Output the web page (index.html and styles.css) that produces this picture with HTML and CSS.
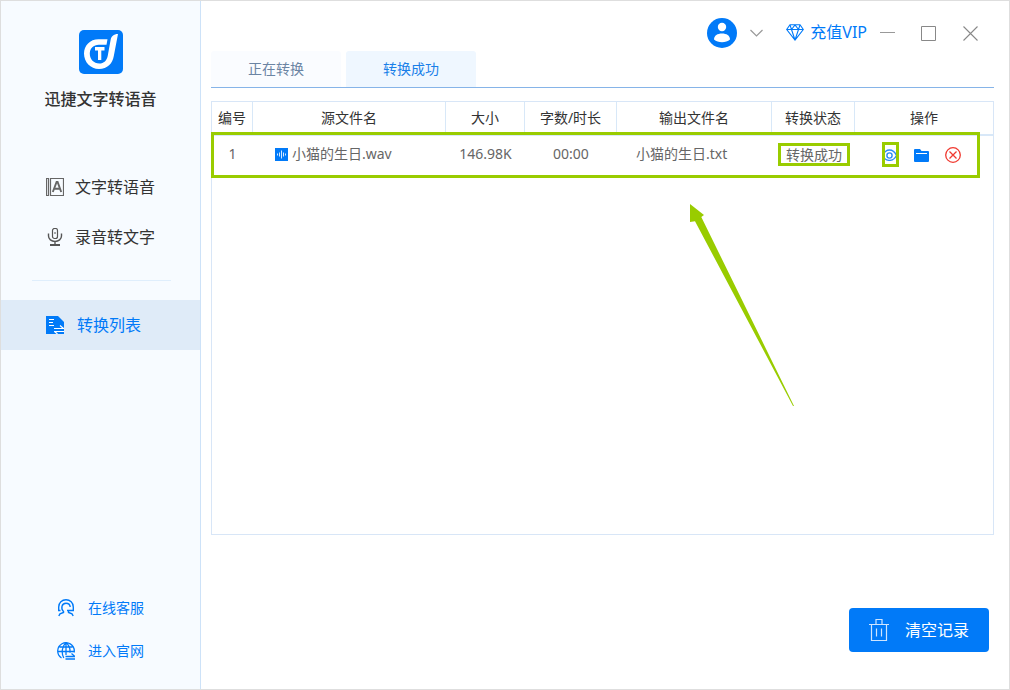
FILE: index.html
```html
<!DOCTYPE html>
<html lang="zh-CN">
<head>
<meta charset="utf-8">
<title>迅捷文字转语音</title>
<link rel="stylesheet" href="styles.css">
</head>
<body>
<div class="app">
  <aside class="sidebar">
    <div class="brand">
      <svg class="logo" width="44" height="44" viewBox="0 0 44 44" aria-hidden="true">
        <rect width="44" height="44" rx="5" fill="#017af8"/>
        <path d="M28.500 9.200H19.500C11 9.200 5 15.500 5 23.500C5 32 11.500 39 20 39C28.500 39 33.500 33.500 34.800 26L39 4C34.500 4 32.300 6.500 31.600 10L28.800 25.500C28 30.500 24.800 33.600 20.300 33.600C14.800 33.600 10.800 29.200 10.800 23.800C10.800 18.500 14.500 14.800 19.800 14.800H27.500Z" fill="#fff"/>
        <path d="M16 17h9.500v3.500H22.300V30H19V20.500H16z" fill="#fff"/>
      </svg>
      <h1 class="brand-name">迅捷文字转语音</h1>
    </div>
    <nav class="nav">
      <a class="nav-item" href="#tts">
        <svg width="18" height="18" viewBox="0 0 18 18" fill="none" stroke="#666" aria-hidden="true">
          <path d="M.5.5h2v17h-2zM4.500.5h13v17h-13z" stroke-width="1.200"/><path d="M6.800 14L10.600 4h1L15.200 14M8.200 10.800h5.600" stroke-width="1.900"/>
        </svg>
        <span>文字转语音</span>
      </a>
      <a class="nav-item" href="#stt">
        <svg width="18" height="18" viewBox="0 0 18 18" fill="none" stroke="#555" aria-hidden="true">
          <rect x="6.500" y=".5" width="5" height="10" rx="2" stroke-width="1.200"/><path d="M2.500 5.500v2.500a6.500 5.500 0 0 0 13 0V5.500M9 13.500v3" stroke-width="1.400"/><path d="M4 17h10" stroke-width="2"/><path d="M8 5h2"/>
        </svg>
        <span>录音转文字</span>
      </a>
      <hr class="nav-rule">
      <a class="nav-item active" href="#list" aria-current="page">
        <svg width="18" height="18" viewBox="0 0 18 18" aria-hidden="true">
          <path d="M0 0h12l6 6v12H0z" fill="#017af8"/>
          <path d="M3 3.500h5M3 6.500h4M3 9.500h5" stroke="#fff"/>
          <path d="M8 12.500h10M8 15.500h10M14 9.500l3.500 3M8.500 15.500l3 2.500" stroke="#fff" stroke-width="1.200" fill="none"/>
        </svg>
        <span>转换列表</span>
      </a>
    </nav>
    <div class="links">
      <a class="link" href="#service">
        <svg width="18" height="18" viewBox="0 0 18 18" fill="none" stroke="#017af8" stroke-width="1.400" aria-hidden="true">
          <path d="M3.500 11.500H1.700V8C1.700 3.500 5 .8 9 .8s7.300 2.700 7.300 7.200v3.500H10"/><path d="M6.500 12.500C3.800 10 4.300 4.300 9 4.300c2.800 0 4 1.700 4.200 3.700M6.500 12v1.500L3 14.800 1.800 17M11.500 12v1.500l3.500 1.300 1.200 2.200"/>
        </svg>
        <span>在线客服</span>
      </a>
      <a class="link" href="#site">
        <svg width="18" height="18" viewBox="0 0 18 18" fill="none" stroke="#017af8" stroke-width="1.300" aria-hidden="true">
          <path d="M4.500 16A8.300 8.300 0 1 1 17.300 9v1.500M6.800 16C4 11 5 4 9 .8c3 2.200 4.300 6 4 10M9 .8V13M1 9.500h16M2.500 5h13M8.500 17h9.500M8.500 14.500H18l-3.500-3"/>
        </svg>
        <span>进入官网</span>
      </a>
    </div>
  </aside>

  <main class="main">
    <header class="titlebar">
      <button class="icon-button avatar" type="button" aria-label="账户">
        <svg width="30" height="30" viewBox="0 0 30 30" aria-hidden="true"><circle cx="15" cy="15" r="15" fill="#017af8"/><circle cx="15" cy="9" r="4.200" fill="#fff"/><path d="M7 21.500c0-4 3.500-6 8-6s8 2 8 6c-2 2-5 2.700-8 2.700s-6-.7-8-2.700z" fill="#fff"/></svg>
      </button>
      <button class="icon-button chevron" type="button" aria-label="展开">
        <svg width="13" height="8" viewBox="0 0 13 8" fill="none" stroke="#999" stroke-width="1.200" aria-hidden="true"><path d="M.5 1l6 6 6-6"/></svg>
      </button>
      <button class="icon-button vip" type="button">
        <svg width="18" height="17" viewBox="0 0 18 17" fill="none" stroke="#017af8" stroke-width="1.100" aria-hidden="true"><path d="M4 .8h10l3.300 4.700L9 16 .7 5.500zM.7 5.500h16.600M4 .8l1.500 4.700L9 16l3.500-10.500L14 .8M5.500 5.500L9 1l3.500 4.500"/></svg>
        <span>充值VIP</span>
      </button>
      <button class="icon-button minimize" type="button" aria-label="最小化">
        <svg width="15" height="15" viewBox="0 0 15 15" stroke="#999" aria-hidden="true"><path d="M0 6.500h15"/></svg>
      </button>
      <button class="icon-button maximize" type="button" aria-label="最大化">
        <svg width="15" height="15" viewBox="0 0 15 15" fill="none" stroke="#888" aria-hidden="true"><path d="M.5.5h14v14H.5z"/></svg>
      </button>
      <button class="icon-button close" type="button" aria-label="关闭">
        <svg width="15" height="15" viewBox="0 0 15 15" stroke="#888" stroke-width="1.100" aria-hidden="true"><path d="M.5.5l14 14M14.500.5l-14 14"/></svg>
      </button>
    </header>

    <div class="tabs" role="tablist">
      <button class="tab" type="button" role="tab" aria-selected="false">正在转换</button>
      <button class="tab selected" type="button" role="tab" aria-selected="true">转换成功</button>
    </div>

    <section class="frame">
      <table class="files">
        <colgroup>
          <col class="col-no"><col><col class="col-size"><col class="col-time"><col class="col-output"><col class="col-status"><col class="col-actions">
        </colgroup>
        <thead>
          <tr><th>编号</th><th>源文件名</th><th>大小</th><th>字数/时长</th><th>输出文件名</th><th>转换状态</th><th>操作</th></tr>
        </thead>
        <tbody>
          <tr>
            <td>1</td>
            <td class="source">
              <span class="file">
                <svg width="13" height="13" viewBox="0 0 13 13" aria-hidden="true"><rect width="13" height="13" fill="#017af8"/><path d="M2.500 5.500v2M4.500 4.500v4M6.500 2.500v8M8.500 4.500v4M10.500 5.500v2" stroke="#d5e9ff"/></svg>
                <span>小猫的生日.wav</span>
              </span>
            </td>
            <td>146.98K</td>
            <td>00:00</td>
            <td class="output">小猫的生日.txt</td>
            <td class="state"><span class="status">转换成功</span></td>
            <td>
              <div class="actions">
                <button class="icon-button view" type="button" aria-label="查看">
                  <svg width="16" height="12" viewBox="0 0 16 12" fill="none" stroke="#2b8cf5" stroke-width="1.400" aria-hidden="true"><path d="M.5 6.500C4-.8 11-.8 14.500 6.500 11 13 4 13 .5 6.500z"/><circle cx="7.500" cy="6.500" r="2.600"/></svg>
                </button>
                <button class="icon-button" type="button" aria-label="打开文件夹">
                  <svg width="15" height="13" viewBox="0 0 15 13" aria-hidden="true"><path d="M0 1q0-1 1-1h5l1.500 2H14q1 0 1 1v9q0 1-1 1H1q-1 0-1-1z" fill="#017af8"/><path d="M2 4.500h11" stroke="#fff"/></svg>
                </button>
                <button class="icon-button" type="button" aria-label="删除">
                  <svg width="16" height="16" viewBox="0 0 16 16" fill="none" stroke="#f0392f" stroke-width="1.300" aria-hidden="true"><circle cx="8" cy="8" r="7.300"/><path d="M4.500 4.500l7 7M11.500 4.500l-7 7"/></svg>
                </button>
              </div>
            </td>
          </tr>
        </tbody>
      </table>
      <div class="row-mark"></div>
      <svg class="arrow" width="104" height="202" viewBox="0 0 104 202" aria-hidden="true"><path d="M0 0L14 11L11.300 13L104 202L103 202L5 17.300L0 18z" fill="#9c0"/></svg>
    </section>

    <footer class="footer">
      <button class="clear" type="button">
        <svg width="20" height="23" viewBox="0 0 20 23" fill="none" stroke="#cfe5ff" stroke-width="1.200" aria-hidden="true"><path d="M0 5.500h20M2.500 5.500v16h15v-16M7 5.500v-5h6v5M7.500 9.500v8M12.500 9.500v8"/></svg>
        <span>清空记录</span>
      </button>
    </footer>
  </main>
</div>
</body>
</html>
```
FILE: styles.css
```css
* { box-sizing: border-box; }

body {
  margin: 0;
  font-family: "Noto Sans", "Noto Sans CJK SC", sans-serif;
  font-size: 14px;
  line-height: 20px;
  color: #333;
  background: #fff;
}

svg { display: block; flex: none; }

button { font: inherit; cursor: pointer; }

.app {
  display: grid;
  grid-template-columns: 200px 1fr;
  min-height: 100vh;
  border: 1px solid #dedede;
}

.sidebar {
  display: flex;
  flex-direction: column;
  background: #f7fbff;
  border-right: 1px solid #cde2f8;
}

.brand {
  display: flex;
  flex-direction: column;
  align-items: center;
  gap: 13px;
  padding-top: 29px;
}

.brand-name {
  margin: 0;
  font-size: 16px;
  font-weight: 500;
  line-height: 24px;
}

.nav { padding-top: 51px; }

.nav-item {
  display: flex;
  align-items: center;
  gap: 11px;
  height: 50px;
  padding-left: 45px;
  font-size: 16px;
  color: #333;
  text-decoration: none;
}

.nav-item.active {
  gap: 13px;
  color: #017af8;
  background: #dfebf8;
}

.nav-rule {
  height: 1px;
  margin: 18px 29px 19px 31px;
  border: 0;
  background: #dfeefc;
}

.links {
  display: flex;
  flex-direction: column;
  gap: 23px;
  margin-top: auto;
  padding: 0 0 28px 56px;
}

.link {
  display: flex;
  align-items: center;
  gap: 13px;
  color: #017af8;
  text-decoration: none;
}

.main {
  display: flex;
  flex-direction: column;
  padding: 0 15px 0 10px;
}

.titlebar {
  display: flex;
  align-items: center;
  justify-content: flex-end;
  padding: 17px 16px 3px 0;
}

.icon-button {
  display: flex;
  align-items: center;
  padding: 0;
  border: 0;
  background: none;
}

.chevron { margin-left: 13px; }

.vip {
  gap: 6px;
  margin-left: 23px;
  padding-bottom: 2px;
  font-size: 16px;
  color: #017af8;
}

.minimize { margin-left: 13px; }
.maximize { margin-left: 26px; }
.close { margin-left: 27px; }

.tabs {
  display: flex;
  gap: 5px;
  border-bottom: 1px solid #86b4e8;
}

.tab {
  width: 130px;
  height: 36px;
  padding: 0;
  border: 0;
  border-radius: 3px 3px 0 0;
  color: #6b84a3;
  background: #fafcff;
}

.tab.selected {
  color: #1a7fe8;
  background: #eff7ff;
}

.frame {
  position: relative;
  flex: 1;
  margin-top: 13px;
  border: 1px solid #d8e6f7;
}

.files {
  width: 100%;
  table-layout: fixed;
  border-collapse: separate;
  border-spacing: 0;
  text-align: center;
}

.col-no { width: 41px; }
.col-size { width: 79px; }
.col-time { width: 92px; }
.col-output { width: 155px; }
.col-status { width: 83px; }
.col-actions { width: 138px; }

.files th {
  height: 34px;
  padding: 0;
  font-weight: 400;
  border-right: 1px solid #d8e8f8;
  border-bottom: 2px solid #d8e8f8;
}

.files th:last-child { border-right: 0; }

.files td {
  height: 36px;
  padding: 0;
  color: #666;
}

.files .source { padding-left: 22px; }

.files .output {
  padding-left: 19px;
  text-align: left;
}

.file {
  display: flex;
  align-items: center;
  gap: 4px;
}

.files .state { padding: 0 5px 0 6px; }

.status {
  display: block;
  line-height: 17px;
  border: 3px solid #9c0;
}

.actions {
  display: flex;
  align-items: center;
  gap: 16px;
  padding: 2px 0 0 27px;
}

.view { position: relative; }

.view::after {
  content: "";
  position: absolute;
  inset: -7px -1px -6px 0;
  border: 3px solid #9c0;
}

.row-mark {
  position: absolute;
  top: 30px;
  left: -1px;
  right: 13px;
  height: 46px;
  border: 3px solid #9c0;
  pointer-events: none;
}

.arrow {
  position: absolute;
  top: 102px;
  left: 478px;
}

.footer {
  display: flex;
  justify-content: flex-end;
  padding: 73px 5px 37px;
}

.clear {
  display: flex;
  align-items: center;
  justify-content: center;
  gap: 16px;
  width: 140px;
  height: 44px;
  padding: 0;
  border: 0;
  border-radius: 4px;
  font-size: 16px;
  color: #fff;
  background: #017af8;
}
```
